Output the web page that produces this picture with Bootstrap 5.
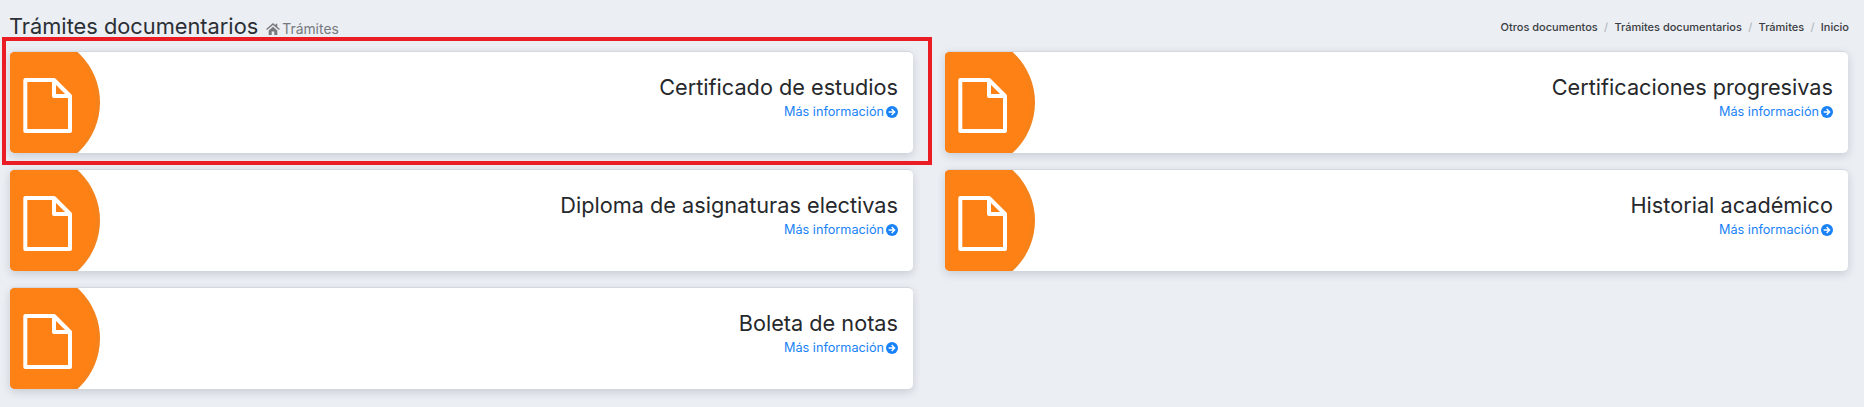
<!doctype html>
<html lang="es">
<head>
<meta charset="utf-8">
<title>Trámites documentarios</title>
<link href="https://cdn.jsdelivr.net/npm/bootstrap@5.3.0/dist/css/bootstrap.min.css" rel="stylesheet">
<style>
html,body{height:100%}
body{background:#ebeef3;font-family:Inter,"Noto Sans",sans-serif;color:#222;overflow:hidden}
.pagina{position:relative;padding:13px 15px 0 9px}
.cabecera{height:28px;margin-bottom:10px}
.titulo{font-size:21.800px;font-weight:400;line-height:28px;margin:0;color:#2b2f36}
.subtitulo{font-size:13.900px;font-weight:400;color:#77797e;margin-left:8px;display:inline-flex;align-items:center;gap:2px;position:relative;top:1px}
.subtitulo svg{width:14px;height:12px;fill:#77797e}
.migas{font-size:11px;font-weight:500;margin:0;--bs-breadcrumb-divider-color:#b5b8bd;--bs-breadcrumb-item-padding-x:6.300px;--bs-breadcrumb-margin-bottom:0}
.migas .breadcrumb-item{color:#3a3d42}
.rejilla{display:grid;grid-template-columns:903px 903px;column-gap:32px;row-gap:16px;margin-left:1px}
.ficha{height:102px;border:0;border-top:1px solid #d4d8de;border-radius:5px;background:#fff;box-shadow:0 3px 8px rgba(60,70,90,.2);overflow:hidden}
.ficha svg.forma{width:91px;height:101px;flex:none}
.cuerpo{padding:25px 15px 0 0}
.cuerpo h3{font-size:21.700px;font-weight:400;line-height:21px;margin:0;color:#26282c}
.mas{font-size:12.700px;color:#1a82f7;text-decoration:none;display:inline-flex;align-items:center;gap:2px;line-height:16px}
.mas svg{width:12px;height:12px;flex:none}
.marco{position:absolute;left:2px;top:37px;width:930px;height:128px;border:4px solid #ea1c24;pointer-events:none}
</style>
</head>
<body>
<svg width="0" height="0" class="position-absolute">
<defs>
<g id="forma">
<circle cx="22" cy="50.500" r="68" fill="#f5821a"/>
<circle cx="18" cy="50.500" r="68" fill="#fe8115"/>
<path d="M15.300 28H44L60 44V79H15.300Z M44 28V44H60" fill="none" stroke="#fff" stroke-width="4" stroke-linejoin="round"/>
</g>
<symbol id="flecha" viewBox="0 0 16 16">
<circle cx="8" cy="8" r="8" fill="#1a82f7"/>
<path d="M8.200 3.400 12.800 8 8.200 12.600 6.900 11.300 9.100 9.100H3.500V6.900H9.100L6.900 4.700Z" fill="#fff"/>
</symbol>
</defs>
</svg>
<div class="pagina">
  <div class="cabecera d-flex justify-content-between align-items-center">
    <h1 class="titulo">Trámites documentarios<span class="subtitulo"><svg viewBox="0 0 16 14"><path d="M8 0 0 7l1 1.200L8 2.200l7 6L16 7l-3-2.600V1h-2v1.700ZM3 8.800V14h3.500v-4h3v4H13V8.800L8 4.500Z"/></svg>Trámites</span></h1>
    <ol class="breadcrumb migas">
      <li class="breadcrumb-item">Otros documentos</li>
      <li class="breadcrumb-item">Trámites documentarios</li>
      <li class="breadcrumb-item">Trámites</li>
      <li class="breadcrumb-item">Inicio</li>
    </ol>
  </div>
  <div class="rejilla">
    <div class="card ficha flex-row"><svg class="forma" viewBox="0 0 91 101"><use href="#forma"/></svg><div class="cuerpo flex-grow-1 text-end"><h3>Certificado de estudios</h3><a class="mas" href="#">Más información<svg><use href="#flecha"/></svg></a></div></div>
    <div class="card ficha flex-row"><svg class="forma" viewBox="0 0 91 101"><use href="#forma"/></svg><div class="cuerpo flex-grow-1 text-end"><h3>Certificaciones progresivas</h3><a class="mas" href="#">Más información<svg><use href="#flecha"/></svg></a></div></div>
    <div class="card ficha flex-row"><svg class="forma" viewBox="0 0 91 101"><use href="#forma"/></svg><div class="cuerpo flex-grow-1 text-end"><h3>Diploma de asignaturas electivas</h3><a class="mas" href="#">Más información<svg><use href="#flecha"/></svg></a></div></div>
    <div class="card ficha flex-row"><svg class="forma" viewBox="0 0 91 101"><use href="#forma"/></svg><div class="cuerpo flex-grow-1 text-end"><h3>Historial académico</h3><a class="mas" href="#">Más información<svg><use href="#flecha"/></svg></a></div></div>
    <div class="card ficha flex-row"><svg class="forma" viewBox="0 0 91 101"><use href="#forma"/></svg><div class="cuerpo flex-grow-1 text-end"><h3>Boleta de notas</h3><a class="mas" href="#">Más información<svg><use href="#flecha"/></svg></a></div></div>
  </div>
  <div class="marco"></div>
</div>
<script src="https://cdn.jsdelivr.net/npm/bootstrap@5.3.0/dist/js/bootstrap.bundle.min.js"></script>
</body>
</html>
